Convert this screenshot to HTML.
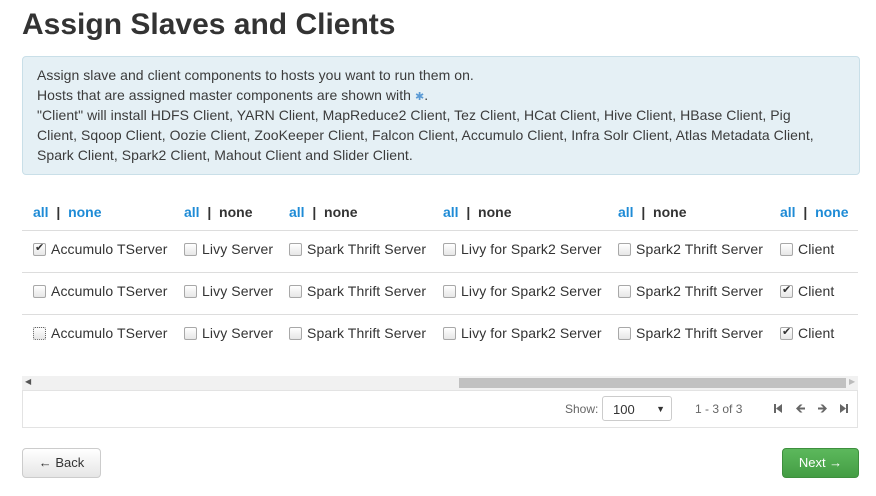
<!DOCTYPE html>
<html><head><style>
body{margin:0;width:876px;height:496px;overflow:hidden;background:#fff;font-family:"Liberation Sans",sans-serif;color:#333;position:relative}
.a{position:absolute;white-space:nowrap}
h1{position:absolute;left:22px;top:8px;margin:0;font-size:30px;font-weight:bold;color:#333}
.info{position:absolute;left:22px;top:56px;width:808px;height:98px;padding:8px 14px 11px 14px;background:#e5f0f5;border:1px solid #c9dfe8;border-radius:4px;font-size:14px;line-height:20px;color:#3b3b3b;letter-spacing:0.05px}
.hd{font-size:14px;font-weight:bold;top:204px}
.hd b{color:#1e8bd6}
.cb{position:absolute;width:11px;height:11px;border:1px solid #a8a8a8;border-radius:2px;background:linear-gradient(#fff,#e6e6e6)}
.lb{font-size:14px;letter-spacing:0.1px}
.line{position:absolute;left:22px;width:836px;height:1px;background:#ddd}
.btn{position:absolute;top:448px;height:28px;border-radius:4px;font-size:13px;line-height:28px;text-align:center}
</style></head><body>
<h1>Assign Slaves and Clients</h1>
<div class="info">Assign slave and client components to hosts you want to run them on.<br>Hosts that are assigned master components are shown with <span style="color:#5b9bd5;font-size:11px;line-height:10px">✱</span>.<br>"Client" will install HDFS Client, YARN Client, MapReduce2 Client, Tez Client, HCat Client, Hive Client, HBase Client, Pig<br>Client, Sqoop Client, Oozie Client, ZooKeeper Client, Falcon Client, Accumulo Client, Infra Solr Client, Atlas Metadata Client,<br>Spark Client, Spark2 Client, Mahout Client and Slider Client.</div>

<div class="a hd" style="left:33px"><b>all</b> &nbsp;| &nbsp;<b>none</b></div>
<div class="a hd" style="left:184px"><b>all</b> &nbsp;| &nbsp;none</div>
<div class="a hd" style="left:289px"><b>all</b> &nbsp;| &nbsp;none</div>
<div class="a hd" style="left:443px"><b>all</b> &nbsp;| &nbsp;none</div>
<div class="a hd" style="left:618px"><b>all</b> &nbsp;| &nbsp;none</div>
<div class="a hd" style="left:780px"><b>all</b> &nbsp;| &nbsp;<b>none</b></div>
<div class="line" style="top:230px"></div>
<div class="line" style="top:272px"></div>
<div class="line" style="top:314px"></div>

<div id="rows"></div>
<script>
var xs=[33,184,289,443,618,780],names=["Accumulo TServer","Livy Server","Spark Thrift Server","Livy for Spark2 Server","Spark2 Thrift Server","Client"];
var checked=[[1,0,0,0,0,0],[0,0,0,0,0,1],[0,0,0,0,0,1]];var h="";
for(var r=0;r<3;r++){var y=241+r*42;for(var c=0;c<6;c++){
h+='<div class="cb" style="left:'+xs[c]+'px;top:'+(y+2)+'px;'+(r==2&&c==0?'border-style:dotted;border-color:#666':'')+'">'+(checked[r][c]?'<span style="position:absolute;left:1px;top:-3px;font-size:11px;color:#333">✔</span>':'')+'</div>';
h+='<div class="a lb" style="left:'+(xs[c]+18)+'px;top:'+y+'px">'+names[c]+'</div>';}}
document.getElementById("rows").innerHTML=h;
</script>

<div class="a" style="left:22px;top:376px;width:836px;height:14px;background:#f1f1f1"></div>
<div class="a" style="left:459px;top:378px;width:387px;height:10px;background:#c1c1c1"></div>
<div class="a" style="left:25px;top:377px;font-size:8px;color:#555">◀</div>
<div class="a" style="left:849px;top:377px;font-size:8px;color:#bbb">▶</div>
<div class="a" style="left:22px;top:390px;width:834px;height:36px;border:1px solid #e3e3e3"></div>
<div class="a" style="left:565px;top:402px;font-size:12px;color:#666">Show:</div>
<div class="a" style="left:602px;top:396px;height:25px;border:1px solid #ccc;border-radius:3px;font-size:13px;line-height:25px;padding-left:10px;box-sizing:border-box;width:70px">100<span style="position:absolute;right:6px;font-size:9px">▼</span></div>
<div class="a" style="left:695px;top:402px;font-size:12px;color:#666">1 - 3 of 3</div>
<svg class="a" style="left:772px;top:402px" width="80" height="14" fill="#666">
<rect x="2" y="2" width="2" height="9"/><path d="M10 2v9L4 6.5z"/>
<path d="M24 6.5L28 2.5h2.5l-3 3H33v2h-5.5l3 3H28z"/>
<path d="M55 6.5L51 2.5h-2.5l3 3H46v2h5.5l-3 3H51z"/>
<path d="M68 2v9l6-4.5z"/><rect x="74" y="2" width="2" height="9"/>
</svg>

<div class="btn" style="left:22px;width:77px;border:1px solid #ccc;background:linear-gradient(#fff,#e6e6e6)">← Back</div>
<div class="btn" style="left:782px;width:75px;border:1px solid #3e8f3e;background:linear-gradient(#5cb85c,#449d44);color:#fff">Next →</div>
</body></html>
